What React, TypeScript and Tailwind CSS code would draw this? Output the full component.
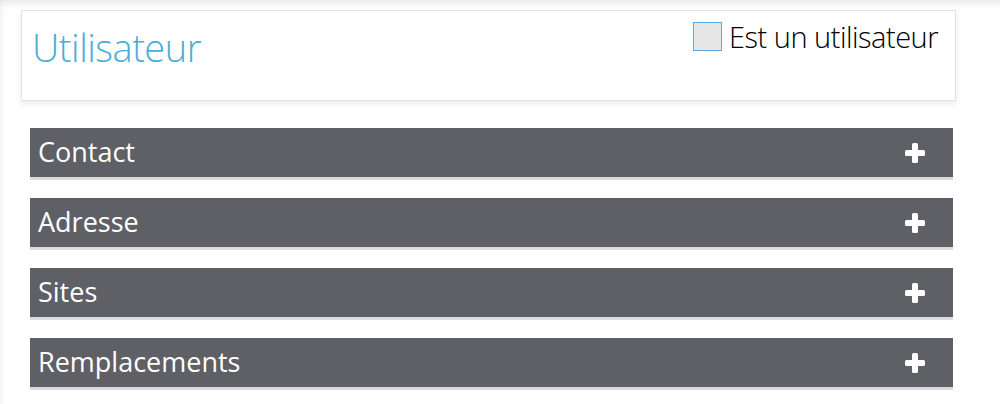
import { JSX } from "react";

const sections = ["Contact", "Adresse", "Sites", "Remplacements"];

function PlusIcon(): JSX.Element {
    return (
        <svg width="22" height="22" viewBox="0 0 22 22" className="shrink-0">
            <rect x="8" y="1" width="6" height="20" rx="1.5" fill="#ffffff" />
            <rect x="1" y="8" width="20" height="6" rx="1.5" fill="#ffffff" />
        </svg>
    );
}

function SectionBar({ title }: { title: string }): JSX.Element {
    return (
        <div className="h-[52px] bg-[#5f6065] border-b-[3px] border-[#dcdcdc] flex items-center justify-between pl-2 pr-[27px]">
            <span className="text-white text-[27px] leading-none pb-[3px]">{title}</span>
            <PlusIcon />
        </div>
    );
}

export default function App(): JSX.Element {
    return (
        <div className="w-[1000px] h-[404px] overflow-hidden bg-white shadow-[inset_5px_8px_8px_-6px_rgba(0,0,0,0.12)] font-['Open_Sans',sans-serif]">
            <div className="pt-[10px] pl-[21px] w-[956px]">
                <div className="h-[91px] bg-white border border-[#e2e2e2] shadow-[0_3px_6px_rgba(0,0,0,0.08)] flex justify-between items-start pl-[10px] pr-[17px]">
                    <h1 className="text-[#4badd8] text-[38px] font-light leading-none mt-[17px] tracking-[-0.5px]">
                        Utilisateur
                    </h1>
                    <label className="flex items-center mt-[11px] gap-[7px]">
                        <span className="w-[29px] h-[29px] bg-[#e6e6e6] border border-[#58a8e8] block" />
                        <span className="text-black text-[29px] font-light leading-none tracking-[-0.5px]">
                            Est un utilisateur
                        </span>
                    </label>
                </div>
            </div>
            <div className="flex flex-col gap-[18px] pl-[30px] w-[953px] mt-[27px]">
                {sections.map((s) => (
                    <SectionBar key={s} title={s} />
                ))}
            </div>
        </div>
    );
}
